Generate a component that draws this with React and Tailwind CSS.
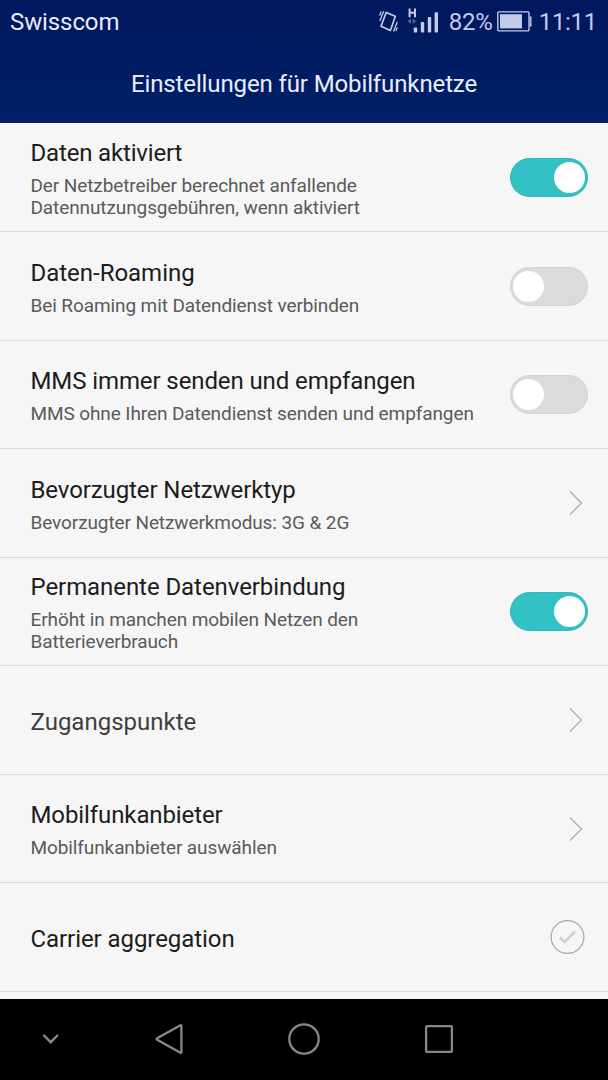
import React from 'react'

const settings = [
  {
    title: 'Daten aktiviert',
    lines: ['Der Netzbetreiber berechnet anfallende', 'Datennutzungsgebühren, wenn aktiviert'],
    control: 'on',
    height: 'h-[109px]',
    tracking: 'tracking-[-0.17px]',
  },
  {
    title: 'Daten-Roaming',
    lines: ['Bei Roaming mit Datendienst verbinden'],
    control: 'off',
    height: 'h-[109px]',
    tracking: 'tracking-[-0.02px]',
  },
  {
    title: 'MMS immer senden und empfangen',
    lines: ['MMS ohne Ihren Datendienst senden und empfangen'],
    control: 'off',
    height: 'h-[108px]',
    tracking: 'tracking-[-0.1px]',
  },
  {
    title: 'Bevorzugter Netzwerktyp',
    lines: ['Bevorzugter Netzwerkmodus: 3G & 2G'],
    control: 'link',
    height: 'h-[109px]',
    tracking: 'tracking-[-0.1px]',
  },
  {
    title: 'Permanente Datenverbindung',
    lines: ['Erhöht in manchen mobilen Netzen den', 'Batterieverbrauch'],
    control: 'on',
    height: 'h-[108px]',
    tracking: 'tracking-[-0.07px]',
  },
  {
    title: 'Zugangspunkte',
    lines: [],
    control: 'link',
    height: 'h-[109px]',
    tracking: 'tracking-[0px]',
    muted: true,
  },
  {
    title: 'Mobilfunkanbieter',
    lines: ['Mobilfunkanbieter auswählen'],
    control: 'link',
    height: 'h-[108px]',
    tracking: 'tracking-[-0.1px]',
  },
  {
    title: 'Carrier aggregation',
    lines: [],
    control: 'check',
    height: 'h-[109px]',
    tracking: 'tracking-[-0.07px]',
  },
]

const StatusBar = () => (
  <div className="flex h-11 items-center justify-between pl-[10px] pr-[11px] text-[24px] text-[#c3cbe9]">
    <span className="tracking-[-0.1px] text-[#e6ebfa]">Swisscom</span>
    <div className="flex items-center">
      {/* Vibration */}
      <svg className="mr-[8px]" width="20" height="24" viewBox="0 0 20 24" fill="none" stroke="currentColor">
        <path d="M7.2 2.5 16.3 6.3 11.4 20.5 2 16.3Z" strokeWidth="1.7" strokeLinejoin="round" />
        <path d="M4.7 1.2.8 11M2.2 1.5.6 5.5M18.3 12 14.5 21.5M18.3 17.5 16.8 21" strokeWidth="1.3" />
      </svg>
      {/* Signal */}
      <svg className="mr-[10px]" width="32" height="28" viewBox="0 0 32 28" fill="currentColor">
        <path d="M1.6 .5h2v3.2h3.4V.5h2v8.8H7V5.7H3.6v3.6h-2Z" />
        <path d="M.3 13.2 4 10.5V16ZM9.3 13.2 5.6 10.5V16Z" opacity=".4" />
        <rect x="6.8" y="19.5" width="3.4" height="5" rx=".8" />
        <rect x="13.8" y="14" width="3.4" height="10.5" rx=".8" />
        <rect x="20.8" y="9" width="3.4" height="15.5" rx=".8" />
        <rect x="27.6" y="4.3" width="3.4" height="20.2" rx=".8" />
      </svg>
      <span className="tracking-[-0.2px]">82%</span>
      <svg className="ml-[4px] mr-[7px]" width="35" height="22" viewBox="0 0 35 22" fill="none">
        <rect x=".8" y=".9" width="31.2" height="19" rx="1" stroke="currentColor" strokeWidth="1.4" />
        <rect x="3" y="3.2" width="22" height="14.2" fill="currentColor" />
        <path d="M32.8 6.2h1v8.5h-1" stroke="currentColor" strokeWidth="1.4" />
      </svg>
      <span className="tracking-[-0.3px]">11:11</span>
    </div>
  </div>
)

const Toggle = ({ on }) => (
  <div
    className={`flex h-[39px] w-[78px] items-center rounded-full border px-[2px] ${
      on ? 'justify-end border-[#34b5b9] bg-[#32c1c4]' : 'justify-start border-[#d2d2d2] bg-[#dbdbdb]'
    }`}
  >
    <div className="size-[31px] rounded-full bg-white" />
  </div>
)

const Control = ({ type }) => {
  if (type === 'link') {
    return (
      <svg className="mr-[5px]" width="14" height="26" viewBox="0 0 14 26" fill="none" stroke="#aaaaaa" strokeWidth="1.2">
        <path d="M1 1.5 12.5 13 1 24.5" />
      </svg>
    )
  }
  if (type === 'check') {
    return (
      <svg className="mr-[3px]" width="35" height="35" viewBox="0 0 35 35" fill="none">
        <circle cx="17.5" cy="17" r="16.4" stroke="#a6a6a6" strokeWidth="1.2" />
        <path d="M9.7 17.3 14.5 22 25 11.6" stroke="#cecece" strokeWidth="2.4" />
      </svg>
    )
  }
  return <Toggle on={type === 'on'} />
}

const SettingRow = ({ item }) => (
  <div className={`flex items-center justify-between border-b border-[#dadada] pl-[30.5px] pr-[20px] ${item.height}`}>
    <div className={`flex flex-col gap-[6px] whitespace-nowrap ${item.lines.length ? 'pt-px' : 'pt-[3px]'}`}>
      <h2 className={`text-[24px] leading-8 ${item.tracking} ${item.muted ? 'text-[#3f3f3f]' : 'text-[#1c1c1c]'}`}>
        {item.title}
      </h2>
      {item.lines.length > 0 && (
        <div className="text-[19px] leading-[22px] tracking-[-0.1px] text-[#5a5a5a]">
          {item.lines.map((line) => (
            <p key={line}>{line}</p>
          ))}
        </div>
      )}
    </div>
    <Control type={item.control} />
  </div>
)

const NavBar = () => (
  <nav className="flex h-[81px] items-center bg-black pb-px text-[#888888]">
    <svg className="ml-[42px]" width="18" height="12" viewBox="0 0 18 12" fill="none" stroke="currentColor" strokeWidth="2.4">
      <path d="M2 2.5 8.7 9.2 15.4 2.5" strokeLinecap="round" />
    </svg>
    <svg className="ml-[94px]" width="30" height="34" viewBox="0 0 30 34" fill="none" stroke="currentColor" strokeWidth="2.3">
      <path d="M27.4 3.8v26.4q0 1-1 .5L3.2 17.8q-1.2-.8 0-1.6L26.4 3.3q1-.5 1 .5Z" strokeLinejoin="round" />
    </svg>
    <svg className="ml-[103px]" width="34" height="34" viewBox="0 0 34 34" fill="none" stroke="currentColor" strokeWidth="2.3">
      <circle cx="17" cy="17" r="14.7" />
    </svg>
    <svg className="ml-[102px]" width="32" height="32" viewBox="0 0 32 32" fill="none" stroke="currentColor" strokeWidth="2.3">
      <rect x="3.1" y="3.1" width="25.8" height="25.8" rx="1" />
    </svg>
  </nav>
)

const App = () => (
  <div className="flex h-[1080px] w-[608px] flex-col overflow-hidden bg-[#f6f6f6] font-['Roboto',sans-serif]">
    <header className="h-[123px] bg-linear-to-b from-[#00175c] to-[#002068]">
      <StatusBar />
      <h1 className="flex h-[79px] items-center justify-center text-[24px] tracking-[-0.12px] text-[#e9edfa]">
        Einstellungen für Mobilfunknetze
      </h1>
    </header>
    <main className="flex-1">
      {settings.map((item) => (
        <SettingRow key={item.title} item={item} />
      ))}
    </main>
    <NavBar />
  </div>
)

export default App
